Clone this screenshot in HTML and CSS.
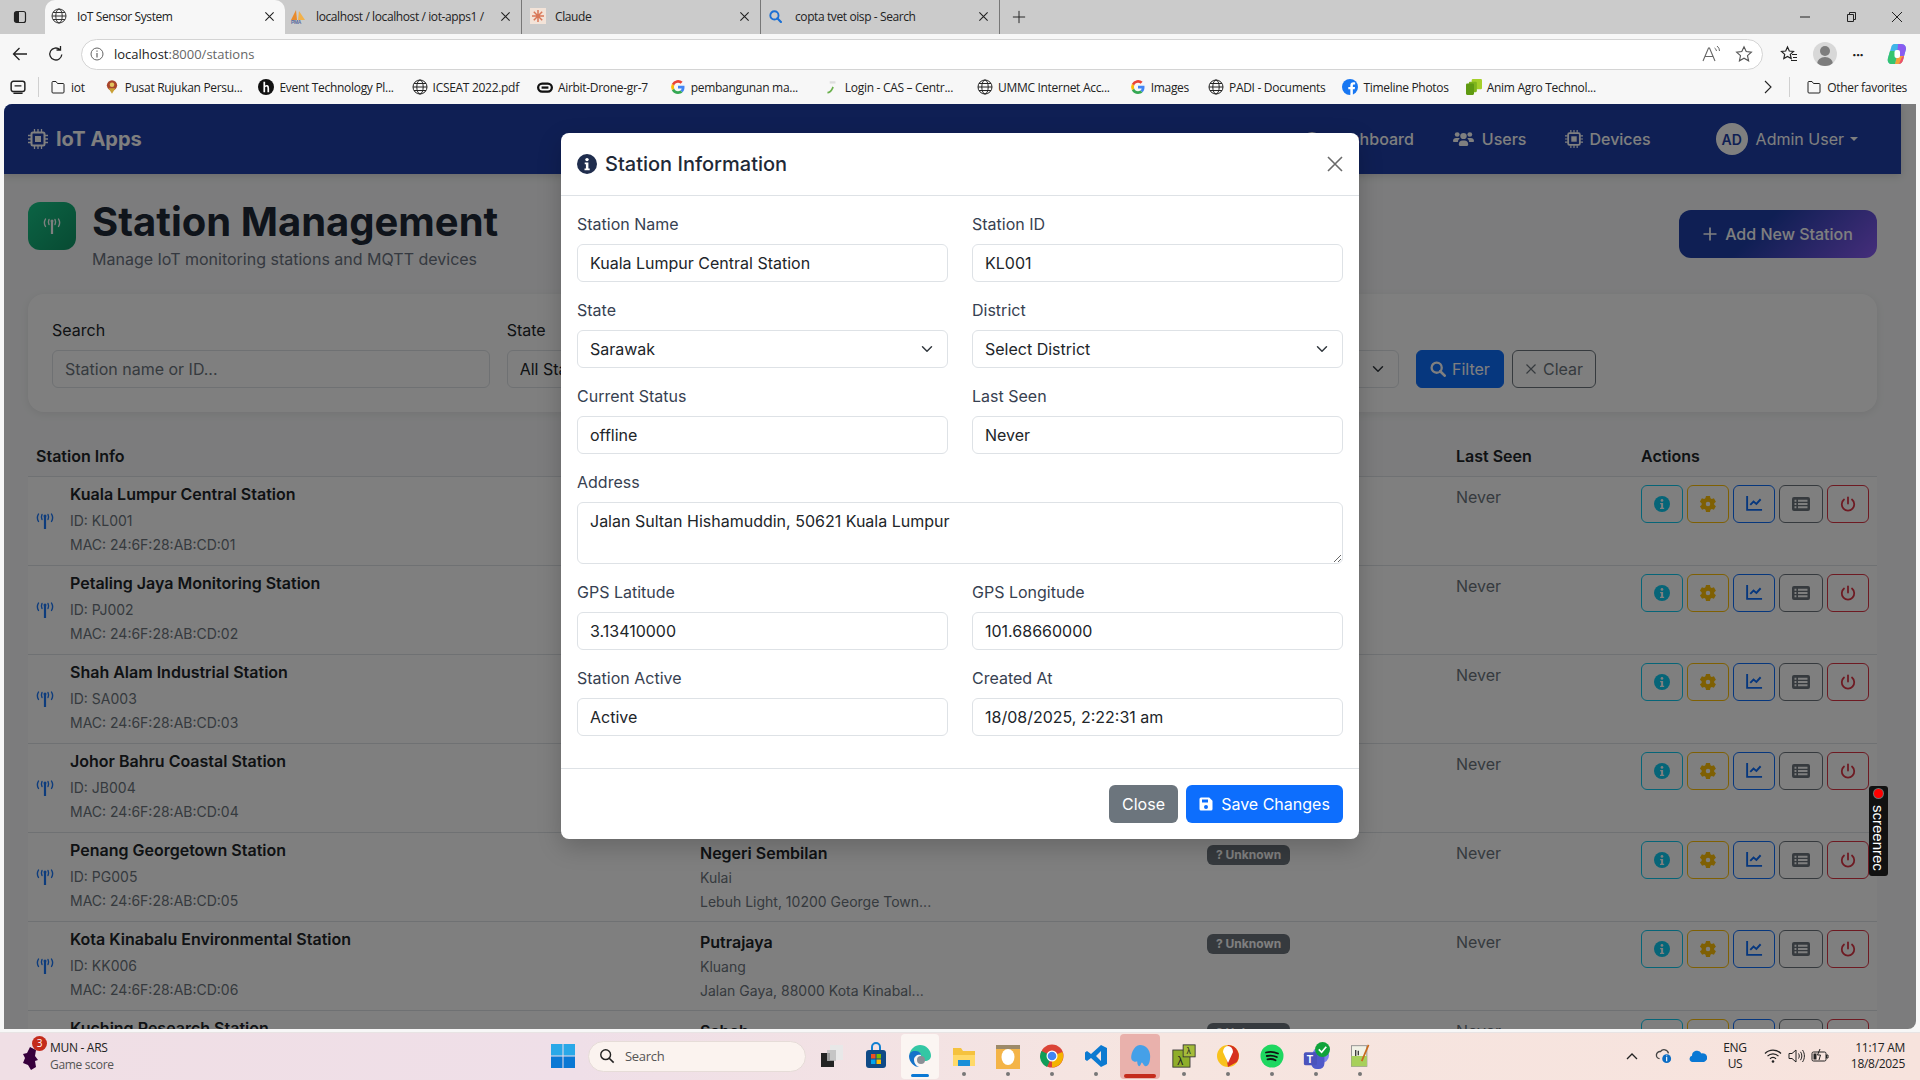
FILE: index.html
```html
<!DOCTYPE html>
<html lang="en">
<head>
  <meta charset="UTF-8" />
  <title>IoT Sensor System</title>
  <link rel="stylesheet" href="styles.css">
</head>
<body>
  <svg class="defs" width="0" height="0">
    <symbol id="globe" viewBox="0 0 16 16"><g fill="none" stroke="currentColor"><circle cx="8" cy="8" r="7"/><ellipse cx="8" cy="8" rx="3.2" ry="7"/><path d="M1 8h14M2 4.5h12M2 11.5h12"/></g></symbol>
    <symbol id="x" viewBox="0 0 12 12"><path d="M1.5 1.5l9 9M10.5 1.5l-9 9" stroke="currentColor" stroke-width="1.2" fill="none"/></symbol>
    <symbol id="folder" viewBox="0 0 16 16"><path d="M2 5V3.5a1 1 0 0 1 1-1h3l1.5 2H13a1 1 0 0 1 1 1V13a1 1 0 0 1-1 1H3a1 1 0 0 1-1-1z" fill="none" stroke="currentColor"/></symbol>
    <symbol id="gg" viewBox="0 0 16 16"><path d="M14.5 8.2c0-.5 0-1-.1-1.400H8v2.700h3.700a3.200 3.200 0 0 1-1.400 2.100l2.200 1.700c1.300-1.200 2-3 2-5.100z" fill="#4285f4"/><path d="M8 15c1.900 0 3.500-.6 4.500-1.700l-2.200-1.700c-.6.400-1.400.7-2.300.7a4 4 0 0 1-3.800-2.800L1.900 11.200A7 7 0 0 0 8 15z" fill="#34a853"/><path d="M4.200 9.500a4 4 0 0 1 0-2.900L1.900 4.800a7 7 0 0 0 0 6.400z" fill="#fbbc05"/><path d="M8 3.800c1 0 1.900.4 2.600 1l2-2A7 7 0 0 0 1.900 4.800l2.300 1.800A4 4 0 0 1 8 3.800z" fill="#ea4335"/></symbol>
    <symbol id="chip" viewBox="0 0 20 20"><g fill="none" stroke="currentColor"><rect x="3.500" y="3.500" width="13" height="13" rx="1.500" stroke-width="2"/><rect x="7" y="7" width="6" height="6" fill="currentColor" stroke="none"/><path d="M6.500 0v3M10 0v3M13.500 0v3M6.500 17v3M10 17v3M13.500 17v3M0 6.500h3M0 10h3M0 13.500h3M17 6.500h3M17 10h3M17 13.500h3" stroke-width="1.300"/></g></symbol>
    <symbol id="users" viewBox="0 0 20 16" preserveAspectRatio="none"><g fill="currentColor"><circle cx="4" cy="3.500" r="2.300"/><circle cx="16" cy="3.500" r="2.300"/><circle cx="10" cy="5" r="3.100"/><path d="M0 10c0-2 1.300-3 3-3h2c.5 0 1 .1 1.400.4A4.500 4.500 0 0 0 4.600 11H.8C.3 11 0 10.600 0 10zM20 10c0-2-1.300-3-3-3h-2c-.5 0-1 .1-1.400.4a4.500 4.500 0 0 1 1.800 3.600h3.800c.5 0 .8-.4.800-1zM5.500 13.500C5.500 11 7 9.500 9 9.500h2c2 0 3.500 1.500 3.500 4 0 .9-.6 1.500-1.500 1.500H7c-.9 0-1.500-.6-1.500-1.500z"/></g></symbol>
    <symbol id="gauge" viewBox="0 0 20 16"><path d="M10 1a9.500 9.500 0 0 0-9.500 9.500c0 1.700.5 3.300 1.300 4.500h16.400c.8-1.200 1.300-2.800 1.300-4.500A9.500 9.500 0 0 0 10 1z" fill="currentColor"/></symbol>
    <symbol id="tower" viewBox="0 0 18 16"><g fill="none" stroke="currentColor" stroke-linecap="round"><path d="M9 4v12" stroke-width="2.200"/><path d="M6 1.500c-.8 1.700-.8 3.300 0 5M12 1.500c.8 1.700.8 3.300 0 5" stroke-width="1.400"/><path d="M2.500 1c-1.500 2.500-1.500 5 0 7.500M15.500 1c1.500 2.500 1.500 5 0 7.500" stroke-width="1.400"/></g><circle cx="9" cy="3" r="1.500" fill="currentColor"/></symbol>
    <symbol id="info" viewBox="0 0 20 20"><circle cx="10" cy="10" r="10" fill="currentColor"/><g fill="#fff"><circle cx="10" cy="5.600" r="1.700"/><path d="M7.700 8.600h3.700v6h1.300v1.600H7.500v-1.600h1.400v-4.400H7.700z"/></g></symbol>
    <symbol id="gear" viewBox="0 0 20 20"><path fill-rule="evenodd" fill="currentColor" d="M7.500 0h5l.6 2.800 1.600.9 2.700-.9 2.500 4.300-2.100 1.900v2l2.100 1.900-2.500 4.300-2.700-.9-1.600.9-.6 2.800h-5l-.6-2.800-1.600-.9-2.700.9L-.1 13l2.100-1.900V9L-.1 7.100l2.500-4.300 2.700.9 1.600-.9zM10 7.200a2.800 2.800 0 1 0 0 5.600 2.800 2.800 0 0 0 0-5.600z"/></symbol>
    <symbol id="chart" viewBox="0 0 18 18"><path d="M1.200 1v14.800H17" fill="none" stroke="currentColor" stroke-width="2"/><path d="M4.500 10.500l3.500-3.500 3 2.500 4.500-5" fill="none" stroke="currentColor" stroke-width="2"/></symbol>
    <symbol id="list" viewBox="0 0 18 16"><path fill-rule="evenodd" fill="currentColor" d="M2 1h14a2 2 0 0 1 2 2v10a2 2 0 0 1-2 2H2a2 2 0 0 1-2-2V3a2 2 0 0 1 2-2zM2.500 3.800v1.900h1.900V3.800zM6 3.800v1.900h9.500V3.800zM2.500 7v1.900h1.900V7zM6 7v1.900h9.500V7zM2.500 10.300v1.900h1.900v-1.900zM6 10.300v1.900h9.500v-1.900z"/></symbol>
    <symbol id="power" viewBox="0 0 18 18"><g fill="none" stroke="currentColor" stroke-width="2" stroke-linecap="round"><path d="M9 1.500V8.500"/><path d="M4.500 4a7 7 0 1 0 9 0"/></g></symbol>
    <symbol id="q" viewBox="0 0 18 18"><circle cx="7.500" cy="7.500" r="5.700" fill="none" stroke="currentColor" stroke-width="2.600"/><path d="M11.500 11.500L16.500 16.500" stroke="currentColor" stroke-width="3" stroke-linecap="round"/></symbol>
  </svg>

  <!-- browser top -->
  <div class="tabstrip">
    <svg class="side-ico" viewBox="0 0 14 14"><rect x="1.500" y="1.500" width="11" height="11" rx="2" fill="none" stroke="#222" stroke-width="1.200"/><rect x="2" y="2" width="4" height="10" fill="#222"/></svg>
    <div class="tab tab-active">
      <svg class="ico16"><use href="#globe"/></svg>
      <span class="tab-name">IoT Sensor System</span>
      <svg class="tab-x"><use href="#x"/></svg>
    </div>
    <div class="tab tab-pma">
      <svg class="ico16" viewBox="0 0 16 16"><path d="M1 12L6 2l1 10z" fill="#e98a2b"/><path d="M8 12L9 3l6 9z" fill="#f2b14a"/><text x="1" y="16" font-size="5" font-weight="700" fill="#556b9e" font-family="Liberation Sans">PMA</text></svg>
      <span class="tab-name">localhost / localhost / iot-apps1 /</span>
      <svg class="tab-x"><use href="#x"/></svg>
    </div>
    <div class="tab">
      <svg class="ico16" viewBox="0 0 16 16"><rect width="16" height="16" fill="#f3e3d8"/><path d="M8 2v12M2 8h12M3.800 3.800l8.400 8.400M12.200 3.800l-8.400 8.400" stroke="#d97757" stroke-width="1.500"/></svg>
      <span class="tab-name">Claude</span>
      <svg class="tab-x"><use href="#x"/></svg>
    </div>
    <div class="tab">
      <svg class="ico16 ico-bing"><use href="#q"/></svg>
      <span class="tab-name">copta tvet oisp - Search</span>
      <svg class="tab-x"><use href="#x"/></svg>
    </div>
    <svg class="new-tab" viewBox="0 0 16 16"><path d="M8 1v14M1 8h14" stroke="#222" stroke-width="1.100"/></svg>
    <div class="win-btns">
      <svg viewBox="0 0 12 12"><path d="M1 6h10" stroke="#222"/></svg>
      <svg viewBox="0 0 12 12"><path d="M2.500 3.500h6v7h-6zM4.500 3.500v-2h6v7h-2" fill="none" stroke="#222"/></svg>
      <svg viewBox="0 0 12 12"><path d="M1 1l10 10M11 1L1 11" stroke="#222" fill="none"/></svg>
    </div>
  </div>

  <div class="toolbar">
    <svg class="tb-ico" viewBox="0 0 18 18"><path d="M16 9H2.500M8.500 3L2.500 9l6 6" fill="none" stroke="#222" stroke-width="1.300"/></svg>
    <svg class="tb-ico" viewBox="0 0 18 18"><path d="M14.800 9.500a6 6 0 1 1-2-5M13.500 1v4h-4" fill="none" stroke="#222" stroke-width="1.300"/></svg>
    <div class="addr">
      <svg class="addr-info" viewBox="0 0 14 14"><circle cx="7" cy="7" r="6" fill="none" stroke="#666"/><path d="M7 6v4.500M7 3.500v1.200" stroke="#666" stroke-width="1.200"/></svg>
      <span class="addr-host">localhost</span><span class="addr-path">:8000/stations</span>
      <svg class="addr-read" viewBox="0 0 20 18"><path d="M1 16L6.500 3h1L13 16M3 11.500h8" fill="none" stroke="#666" stroke-width="1.100"/><path d="M12.500 3a4 4 0 0 1 2 3M15 1a6 6 0 0 1 2.500 5" fill="none" stroke="#666"/></svg>
      <svg class="addr-star" viewBox="0 0 18 18"><path d="M9 1.800l2.200 4.800 5.200.6-3.900 3.500 1.100 5.100L9 13.200l-4.600 2.600 1.100-5.100L1.600 7.200l5.200-.6z" fill="none" stroke="#555" stroke-width="1.100"/></svg>
    </div>
    <svg class="tb-fav" viewBox="0 0 18 18"><path d="M7.500 2l1.800 4 4.200.5-3.200 2.900.9 4.200-3.700-2.100-3.700 2.100.9-4.200L1.500 6.500 5.700 6z" fill="none" stroke="#222" stroke-width="1.200"/><path d="M12 9.500h5M13 12.500h4M11 15.500h6" stroke="#222" stroke-width="1.200"/></svg>
    <div class="profile"><span class="pf-head"></span><span class="pf-body"></span></div>
    <span class="tb-dots">···</span>
    <svg class="copilot" viewBox="0 0 24 24"><path d="M9 2h7c4 0 5 3 5 5l-3 11c-1 3-3 4-5 4H7c-3 0-5-2-4-6l3-10C6.500 3 8 2 9 2z" fill="#3fb6e8"/><path d="M13 2h3c4 0 5 3 5 5l-2 7h-7z" fill="#8a5cf0"/><path d="M3 16l2-7h8l-3 13H7c-3 0-5-2-4-6z" fill="#35c46f"/><path d="M10 22l2-8h7l-1 4c-1 3-3 4-5 4z" fill="#f4a13a"/><path d="M14 22l3-7 2-1-1 4c-1 3-3 4-4 4z" fill="#ef4d6e"/><rect x="9.500" y="8" width="5.500" height="8" rx="2" fill="#fff"/></svg>
  </div>

  <div class="bookmarks">
    <svg class="bm-coll" viewBox="0 0 14 14"><rect x="1" y="2" width="12" height="9" rx="2" fill="none" stroke="#222" stroke-width="1.300"/><path d="M4 6h6M3 12.500h8" stroke="#222" stroke-width="1.200"/></svg>
    <span class="bm-sep"></span>
    <div class="bm bm-iot"><svg class="ico16"><use href="#folder"/></svg><span>iot</span></div>
    <div class="bm bm-pusat"><svg class="ico16" viewBox="0 0 14 14"><circle cx="7" cy="5.500" r="4.500" fill="#a8452c"/><path d="M4 8l3 5 3-5z" fill="#c9a035"/><circle cx="7" cy="5" r="2" fill="#e2c35d"/></svg><span>Pusat Rujukan Persu...</span></div>
    <div class="bm bm-event"><svg class="ico16" viewBox="0 0 14 14"><circle cx="7" cy="7" r="7" fill="#111"/><path d="M5.500 2.500v9M5.500 7c2-2 3.500-1 3.500 1v3.500" fill="none" stroke="#fff" stroke-width="1.500"/></svg><span>Event Technology Pl...</span></div>
    <div class="bm bm-icseat"><svg class="ico16"><use href="#globe"/></svg><span>ICSEAT 2022.pdf</span></div>
    <div class="bm bm-airbit"><svg class="ico16" viewBox="0 0 14 14"><rect x="1" y="4" width="12" height="7" rx="3.500" fill="none" stroke="#111" stroke-width="2"/><path d="M4 7.500h6" stroke="#111" stroke-width="2"/></svg><span>Airbit-Drone-gr-7</span></div>
    <div class="bm bm-pemb"><svg class="ico16"><use href="#gg"/></svg><span>pembangunan ma...</span></div>
    <div class="bm bm-login"><svg class="ico16" viewBox="0 0 14 14"><path d="M3 12c3 0 4-3 5-5" stroke="#6ab04c" fill="none" stroke-width="1.500"/><path d="M5 3h5" stroke="#ddd" stroke-width="2"/></svg><span>Login - CAS – Centr...</span></div>
    <div class="bm bm-ummc"><svg class="ico16"><use href="#globe"/></svg><span>UMMC Internet Acc...</span></div>
    <div class="bm bm-images"><svg class="ico16"><use href="#gg"/></svg><span>Images</span></div>
    <div class="bm bm-padi"><svg class="ico16"><use href="#globe"/></svg><span>PADI - Documents</span></div>
    <div class="bm bm-time"><svg class="ico16" viewBox="0 0 14 14"><circle cx="7" cy="7" r="7" fill="#1877f2"/><path d="M9.500 14V9h1.600l.3-2H9.500V5.800c0-.6.300-1 1-1h1V3c-.4-.1-1-.1-1.500-.1-1.700 0-2.700 1-2.700 2.700V7H5.500v2h1.800v5z" fill="#fff"/></svg><span>Timeline Photos</span></div>
    <div class="bm bm-anim"><svg class="ico16" viewBox="0 0 14 14"><rect x="5" y="0" width="9" height="9" rx="1" fill="#a5cf2a"/><rect x="2.500" y="2.500" width="7" height="9" rx="1" fill="#7fb51d"/><rect x="0" y="4" width="7" height="10" rx="1" fill="#5f9a12"/></svg><span>Anim Agro Technol...</span></div>
    <svg class="bm-more" viewBox="0 0 10 14"><path d="M2 1l6 6-6 6" fill="none" stroke="#222" stroke-width="1.100"/></svg>
    <span class="bm-sep bm-sep2"></span>
    <div class="bm bm-other"><svg class="ico16"><use href="#folder"/></svg><span>Other favorites</span></div>
  </div>

  <!-- the app -->
  <div class="viewport">
    <nav class="navbar">
      <div class="brand"><svg class="ico20"><use href="#chip"/></svg>IoT Apps</div>
      <div class="nav-links">
        <a class="nav-link"><svg class="nav-ico"><use href="#gauge"/></svg>Dashboard</a>
        <a class="nav-link"><svg class="nav-ico nav-users"><use href="#users"/></svg>Users</a>
        <a class="nav-link nav-dev"><svg class="nav-chip"><use href="#chip"/></svg>Devices</a>
      </div>
      <div class="nav-user"><span class="avatar">AD</span>Admin User<span class="caret"></span></div>
    </nav>

    <main class="content">
      <div class="page-head">
        <div class="head-icon"><svg class="tower-ico"><use href="#tower"/></svg></div>
        <div class="head-text">
          <h1>Station Management</h1>
          <p>Manage IoT monitoring stations and MQTT devices</p>
        </div>
        <button class="btn-add"><svg class="plus" viewBox="0 0 14 14"><path d="M7 .5v13M.5 7h13" stroke="currentColor" stroke-width="1.700"/></svg>Add New Station</button>
      </div>

      <div class="filter-card">
        <div class="fld"><label>Search</label><input class="ctl" placeholder="Station name or ID..."></div>
        <div class="fld"><label>State</label><select class="ctl"><option>All States</option></select></div>
        <div class="fld"><label>Status</label><select class="ctl"><option>All Status</option></select></div>
        <div class="filter-btns">
          <button class="btn-filter"><svg class="ico16"><use href="#q"/></svg>Filter</button>
          <button class="btn-clear"><svg class="ico12"><use href="#x"/></svg>Clear</button>
        </div>
      </div>

      <table class="stations">
        <thead>
          <tr><th>Station Info</th><th>Location</th><th>Status</th><th>Last Seen</th><th>Actions</th></tr>
        </thead>
        <tbody>
          <tr>
            <td class="info-cell"><div class="st"><svg class="st-ico"><use href="#tower"/></svg><div><div class="st-name">Kuala Lumpur Central Station</div><div class="sub">ID: KL001</div><div class="sub">MAC: 24:6F:28:AB:CD:01</div></div></div></td>
            <td><div class="loc">Sarawak</div><div class="sub">Select District</div><div class="sub">Jalan Sultan Hishamuddin, 50621...</div></td>
            <td><span class="badge">? Unknown</span></td>
            <td class="seen">Never</td>
            <td><div class="acts"><button class="a a-info"><svg><use href="#info"/></svg></button><button class="a a-gear"><svg><use href="#gear"/></svg></button><button class="a a-chart"><svg><use href="#chart"/></svg></button><button class="a a-list"><svg><use href="#list"/></svg></button><button class="a a-power"><svg><use href="#power"/></svg></button></div></td>
          </tr>
          <tr>
            <td class="info-cell"><div class="st"><svg class="st-ico"><use href="#tower"/></svg><div><div class="st-name">Petaling Jaya Monitoring Station</div><div class="sub">ID: PJ002</div><div class="sub">MAC: 24:6F:28:AB:CD:02</div></div></div></td>
            <td><div class="loc">Selangor</div><div class="sub">Petaling</div><div class="sub">Petaling Jaya...</div></td>
            <td><span class="badge">? Unknown</span></td>
            <td class="seen">Never</td>
            <td><div class="acts"><button class="a a-info"><svg><use href="#info"/></svg></button><button class="a a-gear"><svg><use href="#gear"/></svg></button><button class="a a-chart"><svg><use href="#chart"/></svg></button><button class="a a-list"><svg><use href="#list"/></svg></button><button class="a a-power"><svg><use href="#power"/></svg></button></div></td>
          </tr>
          <tr>
            <td class="info-cell"><div class="st"><svg class="st-ico"><use href="#tower"/></svg><div><div class="st-name">Shah Alam Industrial Station</div><div class="sub">ID: SA003</div><div class="sub">MAC: 24:6F:28:AB:CD:03</div></div></div></td>
            <td><div class="loc">Selangor</div><div class="sub">Klang</div><div class="sub">Shah Alam...</div></td>
            <td><span class="badge">? Unknown</span></td>
            <td class="seen">Never</td>
            <td><div class="acts"><button class="a a-info"><svg><use href="#info"/></svg></button><button class="a a-gear"><svg><use href="#gear"/></svg></button><button class="a a-chart"><svg><use href="#chart"/></svg></button><button class="a a-list"><svg><use href="#list"/></svg></button><button class="a a-power"><svg><use href="#power"/></svg></button></div></td>
          </tr>
          <tr>
            <td class="info-cell"><div class="st"><svg class="st-ico"><use href="#tower"/></svg><div><div class="st-name">Johor Bahru Coastal Station</div><div class="sub">ID: JB004</div><div class="sub">MAC: 24:6F:28:AB:CD:04</div></div></div></td>
            <td><div class="loc">Johor</div><div class="sub">Johor Bahru</div><div class="sub">Johor Bahru...</div></td>
            <td><span class="badge">? Unknown</span></td>
            <td class="seen">Never</td>
            <td><div class="acts"><button class="a a-info"><svg><use href="#info"/></svg></button><button class="a a-gear"><svg><use href="#gear"/></svg></button><button class="a a-chart"><svg><use href="#chart"/></svg></button><button class="a a-list"><svg><use href="#list"/></svg></button><button class="a a-power"><svg><use href="#power"/></svg></button></div></td>
          </tr>
          <tr>
            <td class="info-cell"><div class="st"><svg class="st-ico"><use href="#tower"/></svg><div><div class="st-name">Penang Georgetown Station</div><div class="sub">ID: PG005</div><div class="sub">MAC: 24:6F:28:AB:CD:05</div></div></div></td>
            <td><div class="loc">Negeri Sembilan</div><div class="sub">Kulai</div><div class="sub">Lebuh Light, 10200 George Town...</div></td>
            <td><span class="badge">? Unknown</span></td>
            <td class="seen">Never</td>
            <td><div class="acts"><button class="a a-info"><svg><use href="#info"/></svg></button><button class="a a-gear"><svg><use href="#gear"/></svg></button><button class="a a-chart"><svg><use href="#chart"/></svg></button><button class="a a-list"><svg><use href="#list"/></svg></button><button class="a a-power"><svg><use href="#power"/></svg></button></div></td>
          </tr>
          <tr>
            <td class="info-cell"><div class="st"><svg class="st-ico"><use href="#tower"/></svg><div><div class="st-name">Kota Kinabalu Environmental Station</div><div class="sub">ID: KK006</div><div class="sub">MAC: 24:6F:28:AB:CD:06</div></div></div></td>
            <td><div class="loc">Putrajaya</div><div class="sub">Kluang</div><div class="sub">Jalan Gaya, 88000 Kota Kinabal...</div></td>
            <td><span class="badge">? Unknown</span></td>
            <td class="seen">Never</td>
            <td><div class="acts"><button class="a a-info"><svg><use href="#info"/></svg></button><button class="a a-gear"><svg><use href="#gear"/></svg></button><button class="a a-chart"><svg><use href="#chart"/></svg></button><button class="a a-list"><svg><use href="#list"/></svg></button><button class="a a-power"><svg><use href="#power"/></svg></button></div></td>
          </tr>
          <tr>
            <td class="info-cell"><div class="st"><svg class="st-ico"><use href="#tower"/></svg><div><div class="st-name">Kuching Research Station</div><div class="sub">ID: KC007</div><div class="sub">MAC: 24:6F:28:AB:CD:07</div></div></div></td>
            <td><div class="loc">Sabah</div><div class="sub">Kuching</div><div class="sub">Kuching...</div></td>
            <td><span class="badge">? Unknown</span></td>
            <td class="seen">Never</td>
            <td><div class="acts"><button class="a a-info"><svg><use href="#info"/></svg></button><button class="a a-gear"><svg><use href="#gear"/></svg></button><button class="a a-chart"><svg><use href="#chart"/></svg></button><button class="a a-list"><svg><use href="#list"/></svg></button><button class="a a-power"><svg><use href="#power"/></svg></button></div></td>
          </tr>
        </tbody>
      </table>
    </main>

    <div class="backdrop"></div>

    <div class="modal">
      <div class="modal-head">
        <svg class="modal-ico"><use href="#info"/></svg>
        <h5>Station Information</h5>
        <svg class="modal-x" viewBox="0 0 16 16"><path d="M1 1l14 14M15 1L1 15" stroke="currentColor" stroke-width="1.600"/></svg>
      </div>
      <div class="modal-body">
        <div class="form-grid">
          <div class="mf"><label>Station Name</label><input class="ctl" value="Kuala Lumpur Central Station"></div>
          <div class="mf"><label>Station ID</label><input class="ctl" value="KL001"></div>
          <div class="mf"><label>State</label><select class="ctl"><option>Sarawak</option></select></div>
          <div class="mf"><label>District</label><select class="ctl"><option>Select District</option></select></div>
          <div class="mf"><label>Current Status</label><input class="ctl" value="offline"></div>
          <div class="mf"><label>Last Seen</label><input class="ctl" value="Never"></div>
          <div class="mf mf-wide"><label>Address</label><textarea class="ctl">Jalan Sultan Hishamuddin, 50621 Kuala Lumpur</textarea></div>
          <div class="mf"><label>GPS Latitude</label><input class="ctl" value="3.13410000"></div>
          <div class="mf"><label>GPS Longitude</label><input class="ctl" value="101.68660000"></div>
          <div class="mf"><label>Station Active</label><input class="ctl" value="Active"></div>
          <div class="mf"><label>Created At</label><input class="ctl" value="18/08/2025, 2:22:31 am"></div>
        </div>
      </div>
      <div class="modal-foot">
        <button class="btn-close">Close</button>
        <button class="btn-save"><svg class="ico14" viewBox="0 0 14 14"><path fill-rule="evenodd" fill="#fff" d="M2 .5h8.200L13.500 3.800V12a1.500 1.500 0 0 1-1.500 1.500H2A1.500 1.500 0 0 1 .5 12V2A1.500 1.500 0 0 1 2 .5zM3 2.500v3h6v-3zM7 8a2 2 0 1 0 0 4 2 2 0 0 0 0-4z"/></svg>Save Changes</button>
      </div>
    </div>

    <div class="screenrec"><span class="rec-dot"></span><span class="rec-text">screenrec</span></div>
  </div>

  <!-- windows taskbar -->
  <div class="taskbar">
    <div class="score">
      <svg class="score-ico" viewBox="0 0 18 26"><path d="M9 2l6 3-1 6 3 4-3 1 1 6-5 3-3-5-5-2 2-5-2-4 4-1z" fill="#37003c"/></svg>
      <span class="score-badge">3</span>
      <div class="score-text"><div>MUN - ARS</div><div class="score-sub">Game score</div></div>
    </div>
    <svg class="win-logo" viewBox="0 0 24 24"><g fill="#29a8e8"><rect width="11.500" height="11.500"/><rect x="12.500" width="11.500" height="11.500"/></g><g fill="#0a78d4"><rect y="12.500" width="11.500" height="11.500"/><rect x="12.500" y="12.500" width="11.500" height="11.500"/></g></svg>
    <div class="tb-search"><svg class="ico16 search-q" viewBox="0 0 18 18"><circle cx="7.500" cy="7.500" r="5.500" fill="none" stroke="#222" stroke-width="1.600"/><path d="M11.500 11.500l5 5" stroke="#222" stroke-width="1.800"/></svg>Search</div>
    <div class="apps">
      <div class="app"><svg viewBox="0 0 24 24"><rect x="1" y="9" width="13" height="14" fill="#222"/><rect x="10" y="1" width="13" height="15" fill="#e8e8e8"/><rect x="7" y="6" width="9" height="11" fill="#bbb" opacity=".8"/></svg></div>
      <div class="app"><svg viewBox="0 0 24 24"><path d="M8 6V3a4 4 0 0 1 8 0v3" fill="none" stroke="#0f7fd1" stroke-width="2"/><rect x="2" y="6" width="20" height="18" rx="3" fill="#0f4a86"/><rect x="7" y="10" width="4.500" height="4.500" fill="#f25022"/><rect x="12.500" y="10" width="4.500" height="4.500" fill="#7fba00"/><rect x="7" y="15.500" width="4.500" height="4.500" fill="#00a4ef"/><rect x="12.500" y="15.500" width="4.500" height="4.500" fill="#ffb900"/></svg></div>
      <div class="app app-edge"><svg viewBox="0 0 24 24"><path d="M12 1a11 11 0 0 1 11 11c0 3-3 5-6 5-3 0-5-1-5-3 0-1 1-2 1-3 0-2-3-3-5-3C4 8 2 10 1.500 10 2.500 5 7 1 12 1z" fill="#34c7a4"/><path d="M1.500 10C3 7.500 5 7 7 7c3 0 6 1.500 6 4-3-1-7 1-7 5 0 3 2 6 5 7C6 23 1 18 1 12z" fill="#1573c9"/><circle cx="13" cy="16" r="4" fill="#8a8f96"/></svg><span class="app-bar"></span></div>
      <div class="app"><svg viewBox="0 0 24 24"><path d="M1 4h8l2 3h12v15H1z" fill="#f5c23e"/><path d="M1 11h22v11H1z" fill="#ffd968"/><path d="M6 16h12v6H6z" fill="#1a8fd8"/></svg><span class="app-dot"></span></div>
      <div class="app"><svg viewBox="0 0 24 24"><rect y="1" width="24" height="24" fill="#f4b447"/><rect width="24" height="4" y="1" fill="#777" opacity=".7"/><ellipse cx="12" cy="13" rx="6.500" ry="8" fill="#fff"/></svg><span class="app-dot"></span></div>
      <div class="app"><svg viewBox="0 0 24 24"><circle cx="12" cy="12" r="11.500" fill="#db4437"/><path d="M12 12L22.500 8A11.500 11.500 0 0 1 12 23.500z" fill="#f4b400"/><path d="M12 12L7 23A11.500 11.500 0 0 1 1.500 7z" fill="#0f9d58"/><circle cx="12" cy="12" r="5.500" fill="#fff"/><circle cx="12" cy="12" r="4.300" fill="#4285f4"/></svg><span class="app-dot"></span></div>
      <div class="app"><svg viewBox="0 0 24 24"><path d="M17 1l6 3v16l-6 3L7 14l-4 3-2-1.500v-7L3 7l4 3zM17 7l-5 5 5 5z" fill="#0c7ad1" fill-rule="evenodd"/></svg><span class="app-dot"></span></div>
      <div class="app app-open"><svg viewBox="0 0 24 26"><path d="M12 1c6 0 11 5 11 12 0 5-1 11-5 11-2 0-3-4-4-4s-1 4-3 4c-1 0-2-2-2-5-1 0-4 1-6-2-2-4 2-16 9-16z" fill="#45a0e8"/></svg><span class="app-red"></span></div>
      <div class="app"><svg viewBox="0 0 28 28"><rect x="1" y="7" width="20" height="20" fill="#8fae2a" stroke="#333"/><rect x="13" y="1" width="14" height="14" fill="#a5bc3a" stroke="#333"/><text x="6" y="24" font-size="14" font-family="Liberation Sans" fill="#222">λ</text><text x="17" y="12" font-size="10" font-family="Liberation Sans" fill="#222">λ</text></svg><span class="app-dot"></span></div>
      <div class="app"><svg viewBox="0 0 24 24"><circle cx="12" cy="12" r="11" fill="#f8c21c"/><path d="M12 1a11 11 0 0 1 9 17L12 23 9 7z" fill="#d6311f"/><path d="M7 8a5 6 0 0 1 10 0l-5 11z" fill="#fff"/></svg><span class="app-dot"></span></div>
      <div class="app"><svg viewBox="0 0 24 24"><circle cx="12" cy="12" r="11.500" fill="#1ed760"/><path d="M6 8.500c4-1 8-.8 12 1M6.800 12c3.500-.8 7-.5 10 1M7.500 15.300c3-.6 5.500-.4 8 1" fill="none" stroke="#111" stroke-width="1.800" stroke-linecap="round"/></svg><span class="app-dot"></span></div>
      <div class="app app-teams"><svg viewBox="0 0 30 30"><circle cx="20" cy="14" r="9" fill="#7b83eb"/><rect x="10" y="10" width="14" height="19" rx="6" fill="#5059c9"/><rect x="2" y="11" width="14" height="14" rx="2" fill="#4b53bc"/><text x="5" y="22" font-size="11" font-weight="700" font-family="Liberation Sans" fill="#fff">T</text><circle cx="22" cy="8" r="8" fill="#10a33a"/><path d="M18 8l3 3 5-6" fill="none" stroke="#fff" stroke-width="1.800"/></svg><span class="app-dot"></span></div>
      <div class="app"><svg viewBox="0 0 24 28"><rect x="2" y="2" width="18" height="24" fill="#f1f1e6" stroke="#888"/><rect x="2" y="14" width="18" height="12" fill="#a7d05a"/><path d="M7 7v7M10 8v5" stroke="#333" stroke-width="1.500"/><path d="M22 1l-8 19" stroke="#c86a1e" stroke-width="2"/></svg><span class="app-dot"></span></div>
    </div>
    <div class="tray">
      <svg class="tr-chev" viewBox="0 0 12 8"><path d="M1 7l5-5 5 5" fill="none" stroke="#222" stroke-width="1.300"/></svg>
      <svg class="tr-i tr-cloud" viewBox="0 0 18 18"><path d="M4 12a4 4 0 0 1 1-8 5 5 0 0 1 9 2" fill="none" stroke="#444" stroke-width="1.500"/><circle cx="12" cy="12" r="5" fill="#0a6cc4"/><path d="M12 10v5M12 8.500v.8" stroke="#fff" stroke-width="1.300"/></svg>
      <svg class="tr-i tr-drive" viewBox="0 0 18 14"><path d="M3.500 13a3.200 3.200 0 0 1-.5-6.300A5 5 0 0 1 12.500 4.500 4.200 4.200 0 0 1 15 13z" fill="#0a78d4"/></svg>
      <div class="lang"><div>ENG</div><div>US</div></div>
      <svg class="tr-i tr-wifi" viewBox="0 0 18 16"><path d="M1 5.500a11 11 0 0 1 16 0M3.500 8.200a7.500 7.500 0 0 1 11 0M6 10.800a4 4 0 0 1 6 0" fill="none" stroke="#222" stroke-width="1.200"/><circle cx="9" cy="13.500" r="1.300" fill="#222"/></svg>
      <svg class="tr-i tr-snd" viewBox="0 0 18 16"><path d="M1 5.500h3L8 2v12l-4-3.500H1z" fill="none" stroke="#222"/><path d="M10.500 5.500c1 1.500 1 3.500 0 5M12.500 3.800c1.800 2.500 1.800 5.900 0 8.400M14.500 2c2.500 3.500 2.500 8.500 0 12" fill="none" stroke="#222"/></svg>
      <svg class="tr-i tr-bat" viewBox="0 0 18 16"><rect x="1" y="4" width="14" height="9" rx="1.500" fill="none" stroke="#222"/><rect x="2.500" y="5.500" width="3" height="6" fill="#222"/><path d="M15.500 7v3h1.500V7zM9 1L6.500 7h3L8 12" fill="none" stroke="#222"/></svg>
      <div class="clock"><div>11:17 AM</div><div>18/8/2025</div></div>
    </div>
  </div>
</body>
</html>
```
FILE: styles.css
```css
* { box-sizing: border-box; }
html, body { margin: 0; height: 100%; }
body {
  width: 1920px;
  height: 1080px;
  overflow: hidden;
  display: flex;
  flex-direction: column;
  background: #f7f7f7;
  font-family: 'Inter', sans-serif;
  font-size: 16px;
  color: #212529;
}
.defs { position: absolute; }
.ico12 { width: 12px; height: 12px; }
.ico14 { width: 14px; height: 14px; flex: none; }
.ico16 { width: 16px; height: 16px; flex: none; }
.ico20 { width: 20px; height: 20px; flex: none; }

/* browser chrome */
.tabstrip {
  height: 34px;
  flex: none;
  display: flex;
  align-items: center;
  background: #cbcbcb;
  font-family: 'Open Sans', sans-serif;
  font-size: 12px;
  letter-spacing: -0.4px;
  color: #222;
}
.side-ico { width: 14px; height: 14px; margin: 0 13px 0 13px; flex: none; }
.tab {
  width: 239px;
  height: 34px;
  padding: 0 10px 2px 8px;
  display: flex;
  align-items: center;
  gap: 9px;
  flex: none;
  border-right: 1px solid #777;
  position: relative;
}
.tab svg.ico16 { color: #333; }
.tab-name { flex: 1; white-space: nowrap; overflow: hidden; }
.tab-x { width: 11px; height: 11px; flex: none; color: #222; }
.tab-active {
  width: 240px;
  margin-left: 5px;
  background: #f7f7f7;
  border: 0;
  border-radius: 10px 10px 0 0;
  padding-left: 6px;
  gap: 10px;
}
.tab-pma { width: 237px; padding-left: 5px; gap: 10px; }
.ico-bing { color: #1a6fd4 !important; width: 13px; height: 13px; margin-right: 4px; }
.new-tab { width: 14px; height: 14px; margin-left: 12px; }
.win-btns { margin-left: auto; display: flex; gap: 34px; padding-right: 17px; }
.win-btns svg { width: 12px; height: 12px; }

.toolbar {
  height: 36px;
  padding-top: 4px;
  flex: none;
  display: flex;
  align-items: center;
  position: relative;
  background: #f7f7f7;
}
.tb-ico { width: 18px; height: 18px; margin-left: 11px; margin-right: 7px; flex: none; }
.addr {
  width: 1682px;
  height: 31px;
  margin-left: 9px;
  flex: none;
  display: flex;
  align-items: center;
  background: #fff;
  border: 1px solid #d4d4d4;
  border-radius: 16px;
  font-family: 'Open Sans', sans-serif;
  font-size: 13px;
}
.addr-info { width: 14px; height: 14px; margin: 0 10px 0 8px; }
.addr-host { color: #222; }
.addr-path { color: #666; }
.addr-read { width: 20px; height: 18px; margin-left: auto; }
.addr-star { width: 18px; height: 18px; margin: 0 9px 0 13px; }
.tb-fav { width: 18px; height: 18px; margin-left: 17px; flex: none; }
.profile {
  width: 24px;
  height: 24px;
  margin-left: 15px;
  flex: none;
  border-radius: 50%;
  background: #d8d8d8;
  position: relative;
  overflow: hidden;
}
.pf-head { position: absolute; left: 7px; top: 4px; width: 10px; height: 10px; border-radius: 50%; background: #7d7d7d; }
.pf-body { position: absolute; left: 4px; top: 15px; width: 16px; height: 14px; border-radius: 50%; background: #7d7d7d; }
.tb-dots { margin-left: 15px; font-size: 14px; font-weight: 700; color: #222; letter-spacing: -1px; width: 16px; flex: none; }
.copilot { width: 24px; height: 24px; margin-left: 17px; flex: none; }

.bookmarks {
  height: 34px;
  flex: none;
  display: flex;
  align-items: center;
  background: #f7f7f7;
  font-family: 'Open Sans', sans-serif;
  font-size: 12px;
  letter-spacing: -0.3px;
  color: #222;
  padding-left: 10px;
}
.bm-coll { width: 16px; height: 16px; flex: none; }
.bm-sep { width: 1px; height: 20px; background: #d0d0d0; margin-left: 12px; flex: none; }
.bm { display: flex; align-items: center; gap: 5px; white-space: nowrap; flex: none; }
.bm svg { color: #222; }
.bm-iot { margin-left: 11px; }
.bm-pusat { margin-left: 19px; }
.bm-event { margin-left: 16px; }
.bm-icseat { margin-left: 18px; }
.bm-airbit { margin-left: 18px; }
.bm-pemb { margin-left: 22px; }
.bm-login { margin-left: 26px; }
.bm-ummc { margin-left: 24px; }
.bm-images { margin-left: 20px; }
.bm-padi { margin-left: 19px; }
.bm-time { margin-left: 17px; }
.bm-anim { margin-left: 17px; }
.bm-more { width: 10px; height: 14px; margin-left: auto; flex: none; }
.bm-sep2 { margin-left: 16px; }
.bm-other { margin: 0 13px 0 16px; }

/* app page */
.viewport {
  position: relative;
  flex: none;
  height: 925px;
  margin: 0 4px;
  overflow: hidden;
  background: #f8f9fa;
  border-radius: 8px 0 8px 0;
}
.navbar {
  width: 1897px;
  height: 70px;
  display: flex;
  align-items: center;
  padding-left: 24px;
  background: #1e3ea8;
  color: #fff;
  box-shadow: 0 2px 8px rgba(0,0,0,0.15);
}
.brand { display: flex; align-items: center; gap: 8px; font-size: 20px; font-weight: 700; }
.nav-links { margin-left: auto; display: flex; gap: 39px; }
.nav-link { display: flex; align-items: center; gap: 8px; font-weight: 500; }
.nav-ico { width: 20px; height: 16px; }
.nav-users { width: 21px; }
.nav-chip { width: 18px; height: 18px; }
.nav-dev { gap: 6px; }
.nav-user { display: flex; align-items: center; margin: 0 43px 0 65px; font-weight: 400; }
.avatar {
  width: 32px;
  height: 32px;
  margin-right: 8px;
  border-radius: 50%;
  background: #fff;
  color: #1e3ea8;
  font-size: 14px;
  font-weight: 600;
  display: flex;
  align-items: center;
  justify-content: center;
}
.caret { margin-left: 6px; border-top: 4.500px solid #fff; border-left: 4.500px solid transparent; border-right: 4.500px solid transparent; }

.content { width: 1897px; padding: 28px 24px 0; }
.page-head { display: flex; align-items: flex-start; height: 92px; }
.head-icon {
  width: 48px;
  height: 48px;
  border-radius: 12px;
  background: linear-gradient(135deg, #18c88a, #0f9565);
  color: #fff;
  display: flex;
  align-items: center;
  justify-content: center;
  margin-right: 16px;
}
.tower-ico { width: 18px; height: 16px; }
.head-text h1 { margin: -4px 0 0; font-size: 40px; line-height: 48px; font-weight: 700; color: #1f2937; }
.head-text p { margin: 1px 0 0; line-height: 24px; color: #6b7280; }
.btn-add {
  margin: 8px 0 0 auto;
  width: 198px;
  height: 48px;
  border: 0;
  border-radius: 12px;
  background: linear-gradient(135deg, #1e3ea8 40%, #8b5cf6);
  color: #fff;
  font: 500 16px 'Inter', sans-serif;
  display: flex;
  align-items: center;
  justify-content: center;
  gap: 8px;
}
.plus { width: 14px; height: 14px; }

.filter-card {
  height: 118px;
  padding: 24px;
  display: grid;
  grid-template-columns: repeat(3, 438px) 180px;
  column-gap: 16.67px;
  align-items: end;
  background: #fff;
  border-radius: 16px;
  box-shadow: 0 2px 8px rgba(0,0,0,0.08);
}
.fld label, .mf label { display: block; margin-bottom: 8px; line-height: 24px; }
.ctl {
  display: block;
  width: 100%;
  height: 38px;
  padding: 6px 12px;
  font: 400 16px/24px 'Inter', sans-serif;
  color: #212529;
  background: #fff;
  border: 1px solid #dee2e6;
  border-radius: 6px;
  outline: none;
}
.ctl::placeholder { color: #6c757d; }
select.ctl {
  appearance: none;
  padding-right: 36px;
  background-image: url("data:image/svg+xml,%3csvg xmlns='http://www.w3.org/2000/svg' viewBox='0 0 16 16'%3e%3cpath fill='none' stroke='%23343a40' stroke-linecap='round' stroke-linejoin='round' stroke-width='2' d='m2 5 6 6 6-6'/%3e%3c/svg%3e");
  background-repeat: no-repeat;
  background-position: right 12px center;
  background-size: 16px 12px;
}
textarea.ctl { height: 62px; resize: vertical; }
.filter-btns { display: flex; gap: 8px; }
.btn-filter, .btn-clear {
  height: 38px;
  border-radius: 6px;
  font: 400 16px 'Inter', sans-serif;
  display: flex;
  align-items: center;
  justify-content: center;
  gap: 6px;
}
.btn-filter { width: 88px; border: 1px solid #0d6efd; background: #0d6efd; color: #fff; }
.btn-clear { width: 84px; border: 1px solid #6c757d; background: transparent; color: #6c757d; }

.stations {
  width: 100%;
  margin-top: 23px;
  border-collapse: collapse;
  table-layout: fixed;
  background: #fff;
}
.stations th {
  height: 41px;
  padding: 2px 8px 0;
  text-align: left;
  font-weight: 600;
  background: #f8f9fa;
  border-bottom: 1px solid #dee2e6;
}
.stations th:nth-child(1) { width: 664px; }
.stations th:nth-child(2) { width: 507px; }
.stations th:nth-child(3) { width: 249px; }
.stations th:nth-child(4) { width: 185px; }
.stations td {
  height: 89px;
  padding: 8px 8px 6px;
  vertical-align: top;
  line-height: 24px;
  border-bottom: 1px solid #dee2e6;
}
.stations td.info-cell { padding-top: 5px; }
.st { display: flex; align-items: center; gap: 16px; }
.st-ico { width: 18px; height: 16px; color: #1a78fa; flex: none; margin-top: 3px; }
.st-name { font-weight: 600; margin-bottom: 3px; }
.loc { font-weight: 600; margin-bottom: 1px; }
.sub { font-size: 14px; color: #6c757d; }
.seen { color: #6c757d; }
.badge {
  display: inline-block;
  margin-top: 4px;
  height: 20px;
  padding: 0 9px;
  border-radius: 6px;
  background: #6c757d;
  color: #fff;
  font-size: 12px;
  font-weight: 700;
  line-height: 20px;
  vertical-align: top;
}
.acts { display: flex; gap: 4px; }
.a {
  width: 42px;
  height: 38px;
  padding: 0;
  background: transparent;
  border: 1px solid currentColor;
  border-radius: 6px;
  display: flex;
  align-items: center;
  justify-content: center;
}
.a svg { width: 16px; height: 16px; }
.a-info { color: #0dcaf0; }
.a-gear { color: #ffc107; }
.a-chart { color: #0d6efd; }
.a-list { width: 44px; color: #6c757d; }
.a-power { color: #dc3545; }
.a-list svg { width: 18px; }
.a-chart svg { width: 17px; height: 17px; }

.backdrop { position: absolute; inset: 0; background: rgba(0,0,0,0.5); }

/* dialog */
.modal {
  position: absolute;
  z-index: 2;
  left: 557px;
  top: 29px;
  width: 798px;
  height: 706px;
  background: #fff;
  border-radius: 8px;
  box-shadow: 0 8px 24px rgba(0,0,0,0.2);
  display: flex;
  flex-direction: column;
}
.modal-head {
  height: 63px;
  flex: none;
  padding: 0 16px;
  display: flex;
  align-items: center;
  gap: 8px;
  border-bottom: 1px solid #dee2e6;
}
.modal-ico { width: 20px; height: 20px; color: #1f2d4d; }
.modal-head h5 { margin: 0; font-size: 20px; font-weight: 500; color: #1f2937; }
.modal-x { width: 16px; height: 16px; margin-left: auto; color: #6a6a6a; }
.modal-body { flex: 1; padding: 16px; }
.form-grid { display: grid; grid-template-columns: 1fr 1fr; column-gap: 24px; row-gap: 16px; }
.mf label { color: #374151; }
.mf-wide { grid-column: 1 / 3; }
.modal-foot {
  height: 71px;
  flex: none;
  padding: 16px;
  display: flex;
  justify-content: flex-end;
  gap: 8px;
  border-top: 1px solid #dee2e6;
}
.btn-close, .btn-save {
  height: 38px;
  border: 0;
  border-radius: 6px;
  color: #fff;
  font: 400 16px 'Inter', sans-serif;
  display: flex;
  align-items: center;
  justify-content: center;
}
.btn-close { width: 69px; background: #6c757d; }
.btn-save { width: 157px; gap: 8px; background: #0d6efd; }

.screenrec {
  position: absolute;
  z-index: 3;
  left: 1865px;
  top: 682px;
  width: 19px;
  height: 90px;
  background: #111;
  border-radius: 3px;
  display: flex;
  flex-direction: column;
  align-items: center;
  color: #fff;
  padding-top: 3px;
}
.rec-dot { width: 9px; height: 9px; border-radius: 50%; background: #f00; box-shadow: 0 0 0 1px #fff6; flex: none; }
.rec-text {
  writing-mode: vertical-rl;
  font-family: 'Liberation Sans', sans-serif;
  font-size: 15px;
  line-height: 19px;
  margin-top: 7px;
}

/* taskbar */
.taskbar {
  margin-top: 3px;
  height: 48px;
  flex: none;
  display: flex;
  align-items: center;
  position: relative;
  background: linear-gradient(90deg, #f0dfe5, #efdfe8 30%, #f6e5e0 60%, #f7e3dd);
  box-shadow: inset 0 1px 0 #e8e4e4;
  font-family: 'Open Sans', sans-serif;
  font-size: 12px;
  letter-spacing: -0.3px;
  color: #222;
}
.score { width: 551px; height: 48px; position: relative; display: flex; align-items: center; flex: none; padding-left: 21px; }
.score-ico { width: 18px; height: 26px; margin-top: 4px; flex: none; }
.score-badge {
  position: absolute;
  left: 32px;
  top: 4px;
  width: 15px;
  height: 15px;
  border-radius: 50%;
  background: #c42b1c;
  color: #fff;
  font-size: 10px;
  line-height: 15px;
  text-align: center;
}
.score-text { margin-left: 11px; line-height: 17px; }
.score-sub { color: #555; }
.win-logo { width: 24px; height: 24px; flex: none; }
.tb-search {
  width: 218px;
  height: 31px;
  margin-left: 13px;
  flex: none;
  display: flex;
  align-items: center;
  gap: 10px;
  padding-left: 10px;
  background: #fbf3ef;
  border: 1px solid #e6dcd8;
  border-radius: 16px;
  font-size: 13px;
  color: #555;
}
.search-q { width: 16px; height: 16px; }
.apps { display: flex; margin-left: 4px; flex: none; }
.app { width: 44px; height: 47px; position: relative; display: flex; align-items: center; justify-content: center; }
.app svg { width: 24px; height: 24px; overflow: visible; }
.app-edge::before {
  content: "";
  position: absolute;
  left: 3px;
  right: 3px;
  top: 1px;
  bottom: 1px;
  background: #fbf5f2;
  border-radius: 4px;
}
.app-edge svg { position: relative; }
.app-bar { position: absolute; left: 13px; bottom: 3px; width: 18px; height: 3px; border-radius: 2px; background: #0a78d4; }
.app-dot { position: absolute; left: 20px; bottom: 4px; width: 4px; height: 4px; border-radius: 50%; background: #777; }
.app-open::before {
  content: "";
  position: absolute;
  left: 2px;
  right: 2px;
  top: 1px;
  bottom: 1px;
  background: #e9b1ac;
  border-radius: 4px;
}
.app-open svg { position: relative; }
.app-red { position: absolute; left: 6px; right: 6px; bottom: 2px; height: 4px; border-radius: 2px; background: #c42b1c; }
.app-teams svg { width: 28px; height: 28px; }
.tray { margin-left: auto; display: flex; align-items: center; }
.tr-chev { width: 12px; height: 8px; margin-right: 17px; }
.tr-i { width: 18px; height: 16px; flex: none; }
.tr-cloud { margin-right: 16px; }
.tr-drive { margin-right: 10px; }
.lang { width: 36px; text-align: center; line-height: 16px; margin-right: 11px; }
.tr-wifi { margin-right: 6px; }
.tr-snd { margin-right: 5px; }
.tr-bat { margin-right: 16px; }
.clock { width: 60px; text-align: right; line-height: 16px; margin-right: 15px; }
```
